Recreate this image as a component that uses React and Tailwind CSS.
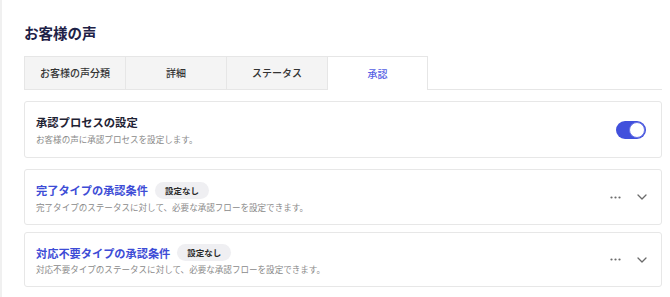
import React from "react";

const font = { fontFamily: '"Noto Sans CJK JP", "Noto Sans", sans-serif' };

function Dots() {
  return (
    <svg width="11" height="3" viewBox="0 0 11 3" className="block">
      <circle cx="1.5" cy="1.5" r="1.1" fill="#6b6b6b" />
      <circle cx="5.5" cy="1.5" r="1.1" fill="#6b6b6b" />
      <circle cx="9.5" cy="1.5" r="1.1" fill="#6b6b6b" />
    </svg>
  );
}

function Chevron() {
  return (
    <svg width="10" height="6" viewBox="0 0 10 6" className="block">
      <path d="M1 1 L5 5 L9 1" fill="none" stroke="#6b6b6b" strokeWidth="1.3" strokeLinecap="round" strokeLinejoin="round" />
    </svg>
  );
}

function CondCard({ title, desc, className }) {
  return (
    <div className={"flex items-center rounded-[3px] border border-[#e7e7e7] bg-white pl-[11px] pr-[14px] " + className}>
      <div className="flex flex-1 flex-col">
        <div className="flex items-center gap-[7px]">
          <span className="text-[11.2px] font-bold leading-[16px] text-[#3d4cd6]">{title}</span>
          <span className="flex h-[17px] items-center rounded-full bg-[#efeff2] px-[10px] text-[8.5px] font-bold leading-none text-[#2a2a2a]">
            設定なし
          </span>
        </div>
        <div className="mt-[2px] text-[8.55px] leading-[12px] text-[#8a8a8a]">{desc}</div>
      </div>
      <div className="flex items-center gap-[16px]">
        <Dots />
        <Chevron />
      </div>
    </div>
  );
}

export default function App() {
  const tabs = ["お客様の声分類", "詳細", "ステータス"];
  return (
    <div className="h-[297px] w-[670px] overflow-hidden border-l-2 border-[#f0f0f0] bg-white" style={font}>
      <div className="pl-[22px] pr-[8px]">
        <div className="pt-[24px] text-[14.5px] font-bold leading-[18px] text-[#1e2247]">お客様の声</div>
        <div className="mt-[14px] flex">
          {tabs.map((t, i) => (
            <div
              key={t}
              className={
                "flex h-[34px] w-[102px] items-center justify-center border border-[#e6e6e6] bg-[#f4f4f4] text-[10px] font-medium leading-none text-[#333] " +
                (i > 0 ? "-ml-px" : "")
              }
            >
              {t}
            </div>
          ))}
          <div className="-ml-px flex h-[34px] w-[101px] items-center justify-center border border-b-0 border-[#e6e6e6] bg-white text-[10px] font-medium leading-none text-[#5560e4]">
            承認
          </div>
          <div className="h-[34px] flex-1 border-b border-[#e6e6e6]" />
        </div>

        <div className="mt-[11px] flex h-[57px] w-[638px] items-center rounded-[3px] border border-[#e7e7e7] bg-white pl-[11px] pr-[15px]">
          <div className="flex flex-1 flex-col">
            <div className="text-[11.3px] font-bold leading-[16px] text-[#1e2233]">承認プロセスの設定</div>
            <div className="mt-[3px] text-[8.55px] leading-[12px] text-[#8a8a8a]">お客様の声に承認プロセスを設定します。</div>
          </div>
          <div className="relative h-[18px] w-[30px] rounded-full bg-[#4150dc]">
            <div className="absolute right-[1px] top-[1px] h-[16px] w-[16px] rounded-full border border-[#6b76e6] bg-white" />
          </div>
        </div>

        <CondCard
          className="mt-[11px] h-[56px] w-[638px]"
          title="完了タイプの承認条件"
          desc="完了タイプのステータスに対して、必要な承認フローを設定できます。"
        />
        <CondCard
          className="mt-[7px] h-[55px] w-[638px]"
          title="対応不要タイプの承認条件"
          desc="対応不要タイプのステータスに対して、必要な承認フローを設定できます。"
        />
      </div>
    </div>
  );
}
